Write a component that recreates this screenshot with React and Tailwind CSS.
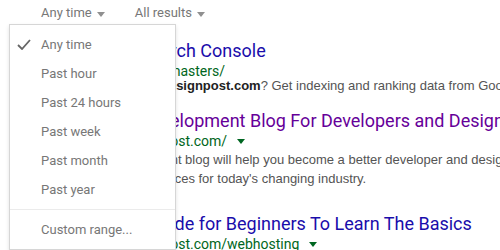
export default function App() {
  const items = ["Any time", "Past hour", "Past 24 hours", "Past week", "Past month", "Past year"];
  const arial = { fontFamily: '"Liberation Sans", Arial, sans-serif' };
  return (
    <div className="relative w-[500px] h-[250px] overflow-hidden bg-white" style={{ fontFamily: "Roboto, Arial, sans-serif" }}>
      <div className="flex h-[26px] items-center pl-[41px] text-[13px] text-[#777]">
        <div className="flex items-center">
          <span>Any time</span>
          <span className="ml-[5px] mt-[2px] h-0 w-0 border-x-[4px] border-t-[5px] border-x-transparent border-t-[#909090]"></span>
        </div>
        <div className="ml-[30px] flex items-center">
          <span>All results</span>
          <span className="ml-[5px] mt-[2px] h-0 w-0 border-x-[4px] border-t-[5px] border-x-transparent border-t-[#909090]"></span>
        </div>
      </div>
      <div className="pl-[41px] pt-[13px] whitespace-nowrap">
        <div className="text-[18px] leading-[24px] text-[#1a0dab]">Welcome to Search Console</div>
        <div className="text-[14px] leading-[16px] text-[#006621]">www.google.ca/webmasters/</div>
        <div className="text-[13px] leading-[14px] text-[#545454]" style={arial}>Do you run a site on <b className="text-[#222]">designpost.com</b>? Get indexing and ranking data from Google...</div>
        <div className="mt-[16px] text-[18px] leading-[24px] text-[#660099]">Simple Web Development Blog For Developers and Designers</div>
        <div className="flex items-center text-[14px] leading-[16px] text-[#006621]">
          <span>https://www.designpost.com/</span>
          <span className="ml-[10px] h-0 w-0 border-x-[4px] border-t-[5px] border-x-transparent border-t-[#006621]"></span>
        </div>
        <div className="mt-[1px] text-[13px] leading-[19px] text-[#545454]" style={arial}>
          <div>Design Post's significant blog will help you become a better developer and designer</div>
          <div>with articles and resources for today's changing industry.</div>
        </div>
        <div className="mt-[24px] text-[18px] leading-[24px] text-[#1a0dab]">Web Hosting Guide for Beginners To Learn The Basics</div>
        <div className="flex items-center text-[14px] leading-[16px] text-[#006621]">
          <span>https://www.designpost.com/webhosting</span>
          <span className="ml-[10px] h-0 w-0 border-x-[4px] border-t-[5px] border-x-transparent border-t-[#006621]"></span>
        </div>
      </div>
      <div className="absolute left-[9px] top-[24px] w-[167px] h-[226px] border border-[#d6d6d6] bg-white shadow-[0_2px_4px_rgba(0,0,0,0.12)] pt-[5px] text-[13px] text-[#777]">
        {items.map((t, i) => (
          <div key={t} className="relative flex h-[29px] items-center pl-[31px]">
            {i === 0 && (
              <svg className="absolute left-[7px] top-[9px]" width="14" height="11" viewBox="0 0 14 11">
                <path d="M1 6 L5 10 L13 1" fill="none" stroke="#666" strokeWidth="1.8" />
              </svg>
            )}
            {t}
          </div>
        ))}
        <div className="mt-[5px] mb-[5px] h-px bg-[#ebebeb]"></div>
        <div className="flex h-[29px] items-center pl-[31px]">Custom range...</div>
      </div>
    </div>
  );
}
